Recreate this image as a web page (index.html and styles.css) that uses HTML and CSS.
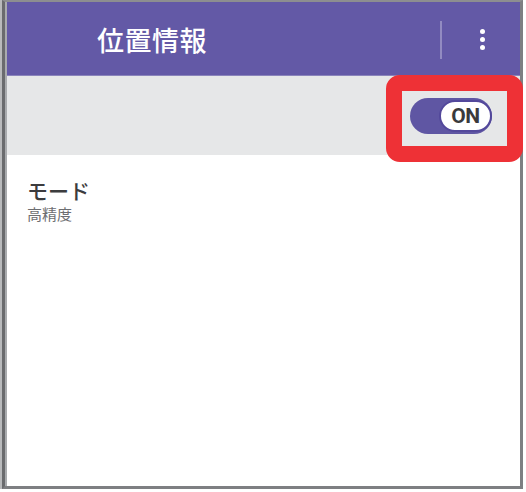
FILE: index.html
```html
<!DOCTYPE html>
<html lang="ja">
<head>
<meta charset="utf-8">
<link rel="stylesheet" href="styles.css">
</head>
<body>
<div class="page">
  <div class="frame">
    <div class="screen">
      <header class="appbar">
        <h1 class="title">位置情報</h1>
        <div class="actions">
          <span class="divider"></span>
          <span class="kebab"><i></i><i></i><i></i></span>
        </div>
      </header>
      <div class="switchbar">
        <div class="toggle"><span class="thumb">ON</span></div>
      </div>
      <div class="item">
        <div class="item-title">モード</div>
        <div class="item-sub">高精度</div>
      </div>
    </div>
  </div>
  <div class="highlight"></div>
</div>
</body>
</html>
```

FILE: styles.css
```css
html, body {
  margin: 0;
  padding: 0;
  background: #ffffff;
}
body {
  width: 526px;
  height: 492px;
  font-family: "Noto Sans CJK JP", "Noto Sans", sans-serif;
}
.page {
  position: relative;
  width: 523px;
  height: 489px;
  box-sizing: border-box;
  border-left: 2px solid #b9babc;
}
.frame {
  height: 100%;
  box-sizing: border-box;
  border-left: 3px solid #6a6b6e;
  border-top: 2px solid #8d8e90;
  border-right: 3px solid #7e7f82;
  border-bottom: 3px solid #7e7f82;
}
.screen {
  height: 100%;
  box-sizing: border-box;
  border-left: 2px solid #a9abae;
  background: #ffffff;
}
.appbar {
  height: 74px;
  box-sizing: border-box;
  background: #6359a6;
  border-bottom: 1px solid #8a84bb;
  display: flex;
  align-items: center;
  justify-content: space-between;
  padding: 2px 0 0 90px;
}
.title {
  margin: 0;
  font-size: 27px;
  line-height: 30px;
  font-weight: 500;
  color: #ffffff;
  letter-spacing: 0.5px;
}
.actions {
  display: flex;
  align-items: center;
  height: 100%;
}
.divider {
  width: 2px;
  height: 38px;
  background: rgba(255, 255, 255, 0.3);
  margin-right: 38px;
}
.kebab {
  display: flex;
  flex-direction: column;
  gap: 3px;
  margin-right: 35px;
}
.kebab i {
  display: block;
  width: 5px;
  height: 5px;
  border-radius: 50%;
  background: #ffffff;
}
.switchbar {
  height: 79px;
  background: #e6e7e8;
  display: flex;
  align-items: center;
  justify-content: flex-end;
  padding-right: 28px;
}
.toggle {
  width: 82px;
  height: 36px;
  box-sizing: border-box;
  border-radius: 18px;
  background: #5f56a3;
  display: flex;
  align-items: center;
  justify-content: flex-end;
  padding: 2px 0;
  margin-top: 1px;
}
.thumb {
  width: 53px;
  height: 32px;
  box-sizing: border-box;
  border: 2px solid #53489b;
  border-radius: 16px;
  background: #ffffff;
  display: flex;
  align-items: center;
  justify-content: center;
  font-family: Roboto, "Liberation Sans", sans-serif;
  font-weight: 700;
  font-size: 21px;
  letter-spacing: -0.5px;
  color: #3a3a3c;
}
.item {
  padding: 22px 0 0 20px;
}
.item-title {
  font-size: 21px;
  line-height: 27px;
  font-weight: 500;
  color: #3c3c3e;
}
.item-sub {
  font-size: 15px;
  line-height: 20px;
  color: #6d6e71;
}
.highlight {
  position: absolute;
  left: 384px;
  top: 75px;
  width: 137px;
  height: 87px;
  box-sizing: border-box;
  border: 16px solid #ee3136;
  border-radius: 14px;
}
```
